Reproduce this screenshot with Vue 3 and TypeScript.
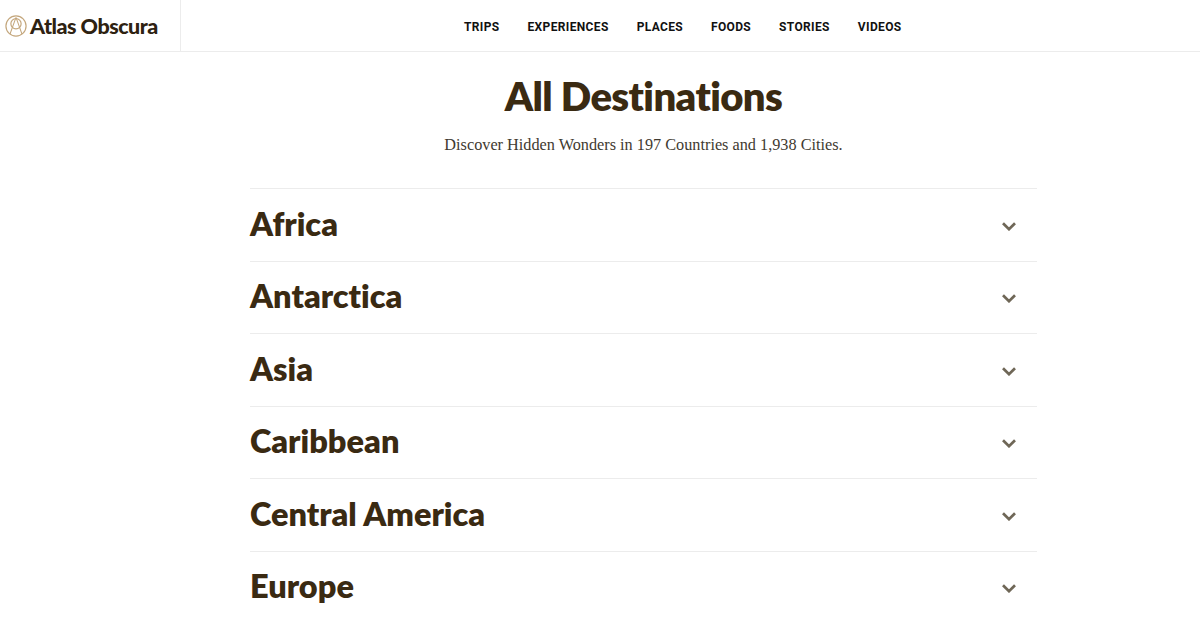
<script setup lang="ts">
const navItems: string[] = ['TRIPS', 'EXPERIENCES', 'PLACES', 'FOODS', 'STORIES', 'VIDEOS']
const regions: string[] = ['Africa', 'Antarctica', 'Asia', 'Caribbean', 'Central America', 'Europe']
</script>

<template>
  <div class="page">
    <header class="header">
      <a class="brand">
        <svg class="logo" viewBox="0 0 24 24" width="22" height="22" fill="none" stroke="#c4a77d" stroke-width="1.3">
          <circle cx="12" cy="12" r="11" />
          <circle cx="12" cy="9.5" r="5.6" />
          <path d="M12 2.6 5.4 21M12 2.6 18.6 21" stroke-width="1.1" />
        </svg>
        <span class="brand-name">Atlas Obscura</span>
      </a>
      <nav class="nav">
        <a v-for="item in navItems" :key="item" class="nav-item">{{ item }}</a>
      </nav>
    </header>
    <main class="main">
      <h1 class="title">All Destinations</h1>
      <p class="subtitle">Discover Hidden Wonders in 197 Countries and 1,938 Cities.</p>
      <section class="list">
        <div v-for="region in regions" :key="region" class="row">
          <h2 class="region">{{ region }}</h2>
          <svg class="chevron" viewBox="0 0 14 9" width="14" height="9" fill="none" stroke="#6f6757" stroke-width="2.7">
            <path d="M1 1.2l6 6 6-6" />
          </svg>
        </div>
      </section>
    </main>
  </div>
</template>

<style>
html, body { margin: 0; background: #fff; overflow: hidden; }
</style>

<style scoped>
.page { width: 1200px; height: 619px; overflow: hidden; color: #3a2a12; font-family: "Lato", "Liberation Sans", sans-serif; font-variant-ligatures: none; }
.header { height: 51px; display: flex; border-bottom: 1px solid #ececec; position: relative; }
.brand { width: 181px; box-sizing: border-box; padding-left: 5px; display: flex; align-items: center; gap: 3px; border-right: 1px solid #ececec; }
.logo { flex: none; }
.brand-name { font-size: 21.5px; font-weight: 900; letter-spacing: -0.5px; color: #2e2211; }
.nav { position: absolute; left: 464px; top: 0; height: 53px; display: flex; align-items: center; gap: 28px; }
.nav-item { font-family: "Roboto", sans-serif; font-size: 12px; font-weight: 700; letter-spacing: 0.35px; color: #111; }
.main { width: 787px; margin-left: 250px; display: flex; flex-direction: column; }
.title { margin: 19px 0 0; text-align: center; font-size: 40px; line-height: 50px; font-weight: 800; letter-spacing: -0.6px; }
.subtitle { margin: 13px 0 0; text-align: center; font-family: "Liberation Serif", serif; font-size: 16.25px; line-height: 22px; color: #3f3a30; }
.list { margin-top: 32px; }
.row { height: 72.5px; box-sizing: border-box; border-top: 1px solid #ececec; display: flex; align-items: center; justify-content: space-between; padding-right: 21px; }
.region { margin: -2px 0 0; font-size: 32.5px; font-weight: 800; line-height: 70px; }
.chevron { flex: none; margin-top: 3px; }
</style>
